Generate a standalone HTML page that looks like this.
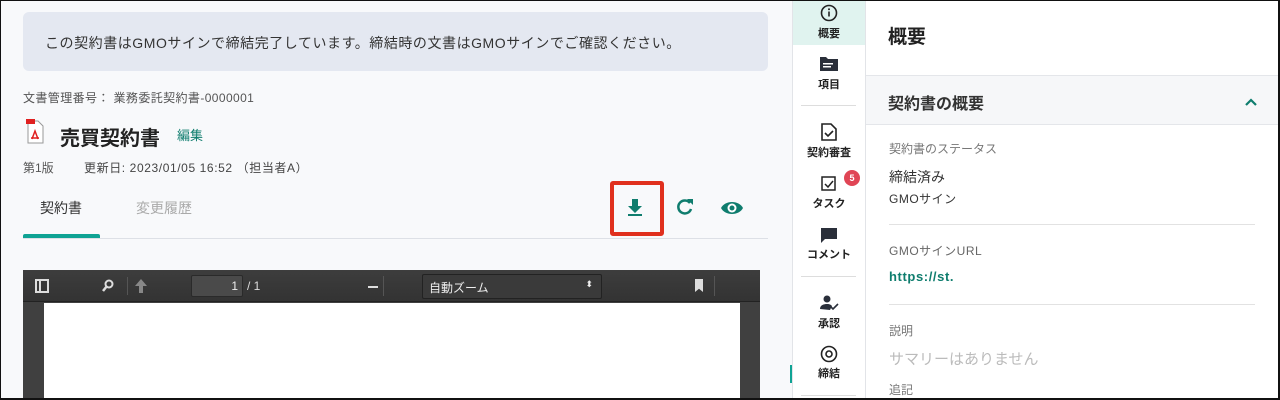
<!DOCTYPE html>
<html><head><meta charset="utf-8"><style>
*{margin:0;padding:0;box-sizing:border-box}
body{width:1280px;height:400px;overflow:hidden;font-family:"Liberation Sans","Noto Sans CJK JP",sans-serif;background:#fff;position:relative;color:#333}
.a{position:absolute;white-space:nowrap}
#frame{position:absolute;inset:0;border:1px solid #111;border-right-width:2px;border-bottom-width:2px;pointer-events:none;z-index:9}
.sl{font-size:11px;font-weight:bold;color:#222;width:72px;text-align:center;left:793px}
.t{color:#0f7d6e}
</style></head><body>
<div class="a" style="left:0;top:0;width:792px;height:400px;background:#f8f9fb"></div>
<div class="a" style="left:23px;top:12px;width:745px;height:59px;background:#e4e8f1;border-radius:6px"></div>
<div class="a" style="left:45px;top:33px;font-size:14px;color:#333;letter-spacing:0.55px">この契約書はGMOサインで締結完了しています。締結時の文書はGMOサインでご確認ください。</div>
<div class="a" style="left:23px;top:89px;font-size:12px;color:#555;letter-spacing:0.4px">文書管理番号： 業務委託契約書-0000001</div>
<svg class="a" style="left:25px;top:117px" width="20" height="28" viewBox="0 0 20 28"><path d="M3 4h10l5 5v17H3z" fill="#fff" stroke="#999"/><rect x="1" y="2" width="9" height="5" fill="#e02020"/><path d="M7 22l3-8 3 8M6 21h8" stroke="#e02020" stroke-width="1.5" fill="none"/></svg>
<div class="a" style="left:60px;top:122px;font-size:20px;font-weight:bold;color:#222">売買契約書</div>
<div class="a t" style="left:177px;top:125px;font-size:13px">編集</div>
<div class="a" style="left:23px;top:159px;font-size:12px;color:#555">第1版</div>
<div class="a" style="left:84px;top:159px;font-size:12px;color:#444;letter-spacing:0.6px">更新日: 2023/01/05 16:52 （担当者A）</div>
<div class="a" style="left:40px;top:198px;font-size:14px;color:#333">契約書</div>
<div class="a" style="left:136px;top:198px;font-size:14px;color:#aaa">変更履歴</div>
<div class="a" style="left:23px;top:238px;width:745px;height:1px;background:#dde0e6"></div>
<div class="a" style="left:23px;top:234px;width:77px;height:4px;background:#0fa394;border-radius:2px 2px 0 0"></div>
<div class="a" style="left:610px;top:181px;width:54px;height:55px;border:4px solid #e0301e;border-radius:3px"></div>
<svg class="a" style="left:626px;top:197px" width="18" height="20" viewBox="0 0 18 20"><path d="M6 2h6v7h4l-7 7-7-7h4z" fill="#0f7d6e"/><rect x="2" y="17" width="14" height="2" fill="#0f7d6e"/></svg>
<svg class="a" style="left:675px;top:197px" width="20" height="20" viewBox="0 0 20 20"><path d="M15 6A6.5 6.5 0 1 0 16 12" stroke="#0f7d6e" stroke-width="2.5" fill="none"/><path d="M12 2h6v6z" fill="#0f7d6e"/></svg>
<svg class="a" style="left:720px;top:199px" width="24" height="18" viewBox="0 0 24 18"><path d="M1 9C5 1 19 1 23 9 19 17 5 17 1 9z" fill="#0f7d6e"/><circle cx="12" cy="9" r="4.5" fill="#fff"/><circle cx="12" cy="9" r="2.5" fill="#0f7d6e"/></svg>
<div class="a" style="left:23px;top:270px;width:737px;height:130px;background:#404040"></div>
<div class="a" style="left:23px;top:270px;width:737px;height:32px;background:linear-gradient(#3d3d3d,#333);border-bottom:1px solid #222"></div>
<div class="a" style="left:44px;top:303px;width:696px;height:97px;background:#fff"></div>
<svg class="a" style="left:35px;top:279px" width="14" height="14"><rect x="1" y="1" width="12" height="12" fill="none" stroke="#ddd" stroke-width="2"/><rect x="4" y="2" width="2" height="10" fill="#ddd"/></svg>
<svg class="a" style="left:101px;top:279px" width="14" height="14"><circle cx="8" cy="5" r="3.5" fill="none" stroke="#ddd" stroke-width="2"/><path d="M6 7l-4 5" stroke="#ddd" stroke-width="2.5"/></svg>
<svg class="a" style="left:134px;top:278px" width="14" height="16"><path d="M7 1l6 7H9v7H5V8H1z" fill="#888"/></svg>
<div class="a" style="left:127px;top:277px;width:1px;height:18px;background:#555"></div>
<div class="a" style="left:191px;top:275px;width:52px;height:22px;background:#4a4a4a;border:1px solid #2a2a2a;border-radius:2px;color:#eee;font-size:12px;text-align:right;padding:3px 4px">1</div>
<div class="a" style="left:247px;top:279px;color:#ddd;font-size:12px">/ 1</div>
<div class="a" style="left:368px;top:286px;width:10px;height:2px;background:#ddd"></div>
<div class="a" style="left:383px;top:276px;width:1px;height:20px;background:#555"></div>
<div class="a" style="left:422px;top:274px;width:180px;height:25px;background:#3a3a3a;border:1px solid #222;border-radius:2px;color:#eee;font-size:12px;padding:4px 6px">自動ズーム<span style="position:absolute;right:8px;top:4px;font-size:9px">⬍</span></div>
<div class="a" style="left:695px;top:279px;width:8px;height:13px;background:#ddd;clip-path:polygon(0 0,100% 0,100% 100%,50% 75%,0 100%)"></div>
<div class="a" style="left:714px;top:276px;width:1px;height:20px;background:#555"></div>
<div class="a" style="left:792px;top:0;width:1px;height:400px;background:#e2e4e8"></div>
<div class="a" style="left:793px;top:0;width:72px;height:400px;background:#fff"></div>
<div class="a" style="left:793px;top:0;width:72px;height:45px;background:#e0f3ef"></div>
<div class="a" style="left:865px;top:0;width:1px;height:400px;background:#e2e4e8"></div>
<svg class="a" style="left:820px;top:4px" width="18" height="18"><circle cx="9" cy="9" r="7.5" fill="none" stroke="#222" stroke-width="1.6"/><rect x="8.2" y="7.5" width="1.6" height="5" fill="#222"/><circle cx="9" cy="5.3" r="1" fill="#222"/></svg>
<div class="a sl" style="top:25px">概要</div>
<svg class="a" style="left:820px;top:56px" width="18" height="15"><path d="M0 1h6l2 2h10v12H0z" fill="#2a2f3a"/><rect x="3" y="7" width="10" height="1.5" fill="#fff"/><rect x="3" y="10" width="8" height="1.5" fill="#fff"/></svg>
<div class="a sl" style="top:76px">項目</div>
<div class="a" style="left:801px;top:105px;width:55px;height:1px;background:#ddd"></div>
<svg class="a" style="left:821px;top:123px" width="16" height="18"><path d="M1 1h9l5 5v11H1z" fill="none" stroke="#222" stroke-width="1.6"/><path d="M4 10l3 3 5-5" stroke="#222" stroke-width="1.6" fill="none"/></svg>
<div class="a sl" style="top:144px">契約審査</div>
<svg class="a" style="left:821px;top:176px" width="16" height="16"><rect x="1" y="1" width="13" height="13" fill="none" stroke="#222" stroke-width="1.5"/><path d="M4 8l3 3 5-6" stroke="#222" stroke-width="1.5" fill="none"/></svg>
<div class="a" style="left:844px;top:170px;width:16px;height:16px;border-radius:50%;background:#e04555;color:#fff;font-size:9px;font-weight:bold;text-align:center;line-height:16px">5</div>
<div class="a sl" style="top:195px">タスク</div>
<svg class="a" style="left:820px;top:227px" width="18" height="17"><path d="M1 1h16v11H5l-4 4z" fill="#2a2f3a"/></svg>
<div class="a sl" style="top:246px">コメント</div>
<div class="a" style="left:801px;top:276px;width:55px;height:1px;background:#ddd"></div>
<svg class="a" style="left:820px;top:295px" width="20" height="17"><circle cx="7" cy="4" r="3.5" fill="#2a2f3a"/><path d="M0 14c0-4 4-5 7-5s4 1 5 2l-2 4z" fill="#2a2f3a"/><path d="M11 12l2 2 5-5" stroke="#2a2f3a" stroke-width="1.6" fill="none"/></svg>
<div class="a sl" style="top:315px">承認</div>
<svg class="a" style="left:820px;top:345px" width="18" height="18"><circle cx="9" cy="9" r="7.5" fill="none" stroke="#222" stroke-width="1.6"/><circle cx="9" cy="9" r="3" fill="none" stroke="#222" stroke-width="1.6"/></svg>
<div class="a sl" style="top:365px">締結</div>
<div class="a" style="left:790px;top:365px;width:2px;height:18px;background:#0fa394"></div>
<div class="a" style="left:801px;top:395px;width:55px;height:1px;background:#ddd"></div>
<div class="a" style="left:888px;top:22px;font-size:19px;font-weight:bold;color:#222">概要</div>
<div class="a" style="left:866px;top:75px;width:414px;height:50px;background:#f6f7f9;border-top:1px solid #e4e6ea;border-bottom:1px solid #e4e6ea"></div>
<div class="a" style="left:888px;top:90px;font-size:16px;font-weight:bold;color:#333">契約書の概要</div>
<svg class="a" style="left:1244px;top:97px" width="14" height="10"><path d="M2 8l5-5 5 5" stroke="#0f7d6e" stroke-width="2.2" fill="none"/></svg>
<div class="a" style="left:889px;top:140px;font-size:12px;color:#777">契約書のステータス</div>
<div class="a" style="left:889px;top:167px;font-size:14px;color:#333">締結済み</div>
<div class="a" style="left:889px;top:190px;font-size:12px;color:#333;letter-spacing:0.5px">GMOサイン</div>
<div class="a" style="left:889px;top:224px;width:366px;height:1px;background:#e2e2e2"></div>
<div class="a" style="left:889px;top:242px;font-size:12px;color:#666;letter-spacing:0.5px">GMOサインURL</div>
<div class="a t" style="left:889px;top:269px;font-size:13px;font-weight:bold;letter-spacing:0.6px">https://st.</div>
<div class="a" style="left:889px;top:304px;width:366px;height:1px;background:#e2e2e2"></div>
<div class="a" style="left:889px;top:322px;font-size:12px;color:#777">説明</div>
<div class="a" style="left:889px;top:348px;font-size:15px;color:#bbb">サマリーはありません</div>
<div class="a" style="left:889px;top:381px;font-size:12px;color:#777">追記</div>
<div id="frame"></div>
</body></html>
